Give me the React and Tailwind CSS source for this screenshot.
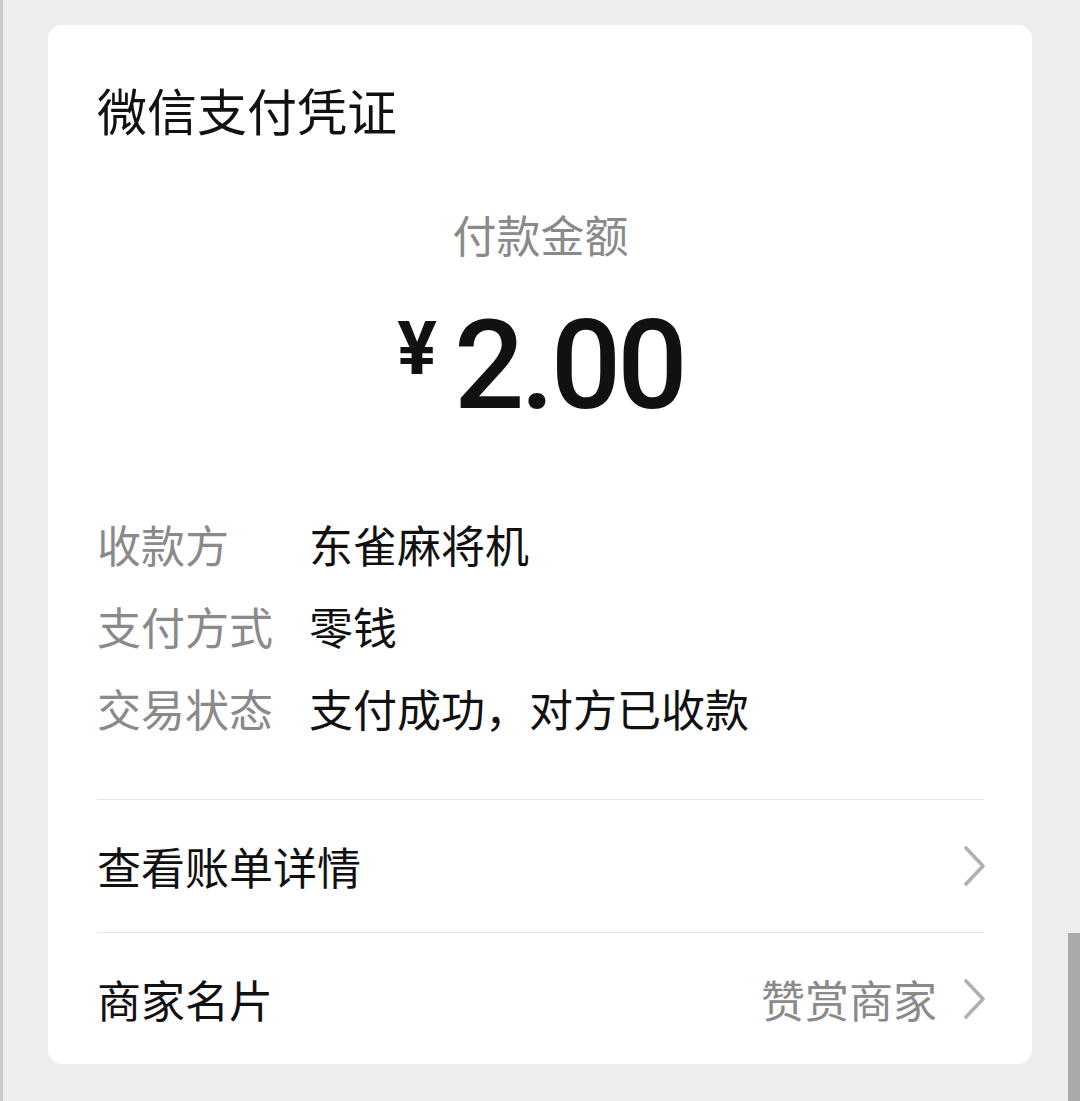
import React from 'react';

const CJK = { fontFamily: '"Noto Sans CJK SC", "Noto Sans", sans-serif' };

const DETAILS = [
  { label: '收款方', value: '东雀麻将机' },
  { label: '支付方式', value: '零钱' },
  { label: '交易状态', value: '支付成功，对方已收款' },
];

function Chevron() {
  return (
    <svg width="24" height="40" viewBox="0 0 24 40" fill="none" className="shrink-0 -mr-[2px]">
      <path d="M4 2 L21 20 L4 38" stroke="#b0b0b0" strokeWidth="3.6" strokeLinecap="round" strokeLinejoin="round" />
    </svg>
  );
}

export default function App() {
  return (
    <div className="relative w-full h-[1101px] bg-[#ededed] border-l-[3px] border-[#c9c9c9] overflow-hidden" style={CJK}>
      <div className="ml-[45px] mt-[25px] w-[984px] h-[1039px] bg-white rounded-[14px] pl-[49px] pr-[48px] pt-[54px] flex flex-col">
        {/* Title */}
        <h1 className="text-[50px] leading-[60px] text-[#111] font-normal">微信支付凭证</h1>

        {/* Amount */}
        <p className="mt-[67px] text-center text-[44px] leading-[56px] text-[#8a8a8a]">付款金额</p>
        <div className="mt-[42px] flex justify-center items-start" style={{ fontFamily: 'Roboto, "Liberation Sans", sans-serif' }}>
          <span className="text-[74px] leading-none font-bold text-[#111] mt-[8px] mr-[17px]">¥</span>
          <span className="text-[124px] leading-none font-medium text-[#111] tracking-[-4px]">2.00</span>
        </div>

        {/* Details */}
        <div className="mt-[75px] flex flex-col">
          {DETAILS.map(d => (
            <div key={d.label} className="flex h-[82px] items-center text-[44px]">
              <span className="w-[212px] shrink-0 text-[#8a8a8a]">{d.label}</span>
              <span className="text-[#111]">{d.value}</span>
            </div>
          ))}
        </div>

        <div className="mt-[50px] h-px bg-[#e5e5e5]" />
        <div className="h-[132px] flex items-center justify-between">
          <span className="text-[44px] text-[#111]">查看账单详情</span>
          <Chevron />
        </div>
        <div className="h-px bg-[#e5e5e5]" />
        <div className="h-[131px] flex items-center justify-between">
          <span className="text-[44px] text-[#111]">商家名片</span>
          <div className="flex items-center gap-[25px]">
            <span className="text-[44px] text-[#8a8a8a]">赞赏商家</span>
            <Chevron />
          </div>
        </div>
      </div>

      {/* scrollbar */}
      <div className="absolute right-0 top-[933px] w-[12px] h-[168px] bg-[#a9a9a9]" />
    </div>
  );
}
